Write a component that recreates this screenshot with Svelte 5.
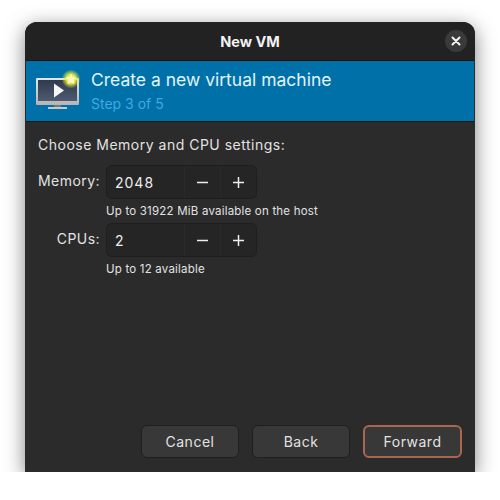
<script>
  const rows = [
    { label: 'Memory:', value: '2048', hint: 'Up to 31922 MiB available on the host' },
    { label: 'CPUs:', value: '2', hint: 'Up to 12 available' }
  ];
</script>

<div class="window">
  <header class="titlebar">
    <span class="title">New VM</span>
    <button class="close" aria-label="Close">
      <svg width="10" height="10" viewBox="0 0 10 10">
        <path d="M1.5 1.5l7 7M8.5 1.5l-7 7" stroke="#f4f4f4" stroke-width="2" stroke-linecap="round" />
      </svg>
    </button>
  </header>

  <div class="banner">
    <svg class="logo" width="46" height="42" viewBox="0 0 46 42">
      <defs>
        <linearGradient id="screen" x1="0" y1="0" x2="0" y2="1">
          <stop offset="0" stop-color="#2f3a4e" />
          <stop offset="1" stop-color="#4d5a70" />
        </linearGradient>
        <linearGradient id="frame" x1="0" y1="0" x2="0" y2="1">
          <stop offset="0" stop-color="#e6e6e6" />
          <stop offset="1" stop-color="#b4b4b4" />
        </linearGradient>
        <radialGradient id="glow">
          <stop offset="0.45" stop-color="#e8ee3a" />
          <stop offset="1" stop-color="#e8ee3a" stop-opacity="0" />
        </radialGradient>
      </defs>
      <rect x="1" y="9" width="43" height="27" rx="1" fill="url(#frame)" />
      <rect x="3" y="11" width="39" height="21" fill="url(#screen)" />
      <rect x="19" y="36" width="7" height="2" fill="#777" />
      <rect x="13" y="38" width="19" height="2" fill="#c8c8c8" />
      <path d="M19 14.5l10 7-10 7z" fill="#f6f6f6" />
      <circle cx="36" cy="10" r="9.5" fill="url(#glow)" />
      <path d="M36 4.5l1.7 3.6 3.9.5-2.9 2.7.8 3.9-3.5-2-3.5 2 .8-3.9-2.9-2.7 3.9-.5z" fill="#fbf7c4" />
    </svg>
    <div class="banner-text">
      <div class="banner-title">Create a new virtual machine</div>
      <div class="banner-step">Step 3 of 5</div>
    </div>
  </div>

  <main class="content">
    <p class="lead">Choose Memory and CPU settings:</p>
    <div class="form">
      {#each rows as row}
        <span class="label">{row.label}</span>
        <div class="spin">
          <span class="value">{row.value}</span>
          <span class="step">
            <svg width="11" height="11" viewBox="0 0 11 11"><path d="M0 5.5h11" stroke="#eee" stroke-width="1.5" /></svg>
          </span>
          <span class="step">
            <svg width="11" height="11" viewBox="0 0 11 11"><path d="M0 5.5h11M5.5 0v11" stroke="#eee" stroke-width="1.5" /></svg>
          </span>
        </div>
        <span class="hint">{row.hint}</span>
      {/each}
    </div>
  </main>

  <footer class="actions">
    <button class="btn">Cancel</button>
    <button class="btn">Back</button>
    <button class="btn primary">Forward</button>
  </footer>
</div>

<style>
  :global(body) {
    background: #fff;
  }

  .window {
    box-sizing: border-box;
    width: 450px;
    height: 450px;
    margin: 22px 25px 0;
    display: flex;
    flex-direction: column;
    background: #2b2b2b;
    border-radius: 12px 12px 0 0;
    box-shadow: 0 5px 20px rgba(0, 0, 0, 0.5);
    color: #e2e2e2;
    font-family: Inter, "Noto Sans", sans-serif;
    overflow: hidden;
  }

  .titlebar {
    position: relative;
    height: 38px;
    flex: none;
    display: flex;
    align-items: center;
    justify-content: center;
    background: #222;
  }

  .title {
    font-size: 14.5px;
    font-weight: 700;
    color: #f2f2f2;
  }

  .close {
    position: absolute;
    right: 8px;
    top: 8px;
    width: 22px;
    height: 22px;
    padding: 0;
    display: flex;
    align-items: center;
    justify-content: center;
    border: none;
    border-radius: 50%;
    background: #3a3a3a;
  }

  .banner {
    flex: none;
    box-sizing: border-box;
    height: 62px;
    display: flex;
    align-items: center;
    gap: 10px;
    padding-left: 9px;
    margin: 0 1px;
    background: #0070a8;
    border-top: 1px solid #141414;
    border-bottom: 1px solid #141414;
  }

  .logo {
    flex: none;
    margin-top: -3px;
  }

  .banner-title {
    font-size: 17.5px;
    line-height: 22px;
    color: #e0f4fd;
  }

  .banner-step {
    font-size: 14px;
    line-height: 20px;
    margin-top: 3px;
    color: #42a8e0;
  }

  .content {
    flex: 1;
    padding: 14px 13px 0;
  }

  .lead {
    margin: 0 0 12px;
    font-size: 14px;
    line-height: 17px;
    letter-spacing: 0.5px;
  }

  .form {
    display: grid;
    grid-template-columns: 62px auto;
    justify-content: start;
    column-gap: 6px;
    align-items: center;
  }

  .label {
    font-size: 14px;
    letter-spacing: 0.45px;
    text-align: right;
    margin-top: -3px;
  }

  .spin {
    box-sizing: border-box;
    width: 151px;
    height: 34px;
    display: flex;
    align-items: center;
    background: #252525;
    border: 1px solid #1e1e1e;
    border-radius: 6px;
  }

  .value {
    flex: 1;
    padding-left: 8px;
    font-size: 14px;
    letter-spacing: 1px;
    color: #eee;
  }

  .step {
    width: 35px;
    height: 100%;
    display: flex;
    align-items: center;
    justify-content: center;
    border-left: 1px solid #2a2a2a;
  }

  .hint {
    grid-column: 2;
    font-size: 11.5px;
    line-height: 14px;
    margin: 5px 0 5px;
    letter-spacing: 0.2px;
  }

  .actions {
    flex: none;
    display: flex;
    justify-content: flex-end;
    gap: 13px;
    padding: 0 13px 14px;
  }

  .btn {
    box-sizing: border-box;
    width: 98px;
    height: 33px;
    padding: 0;
    font-family: inherit;
    font-size: 14px;
    letter-spacing: 0.5px;
    color: #e2e2e2;
    background: #383838;
    border: 1px solid #1f1f1f;
    border-radius: 6px;
  }

  .primary {
    width: 99px;
    border: 2px solid #a9674f;
  }
</style>
